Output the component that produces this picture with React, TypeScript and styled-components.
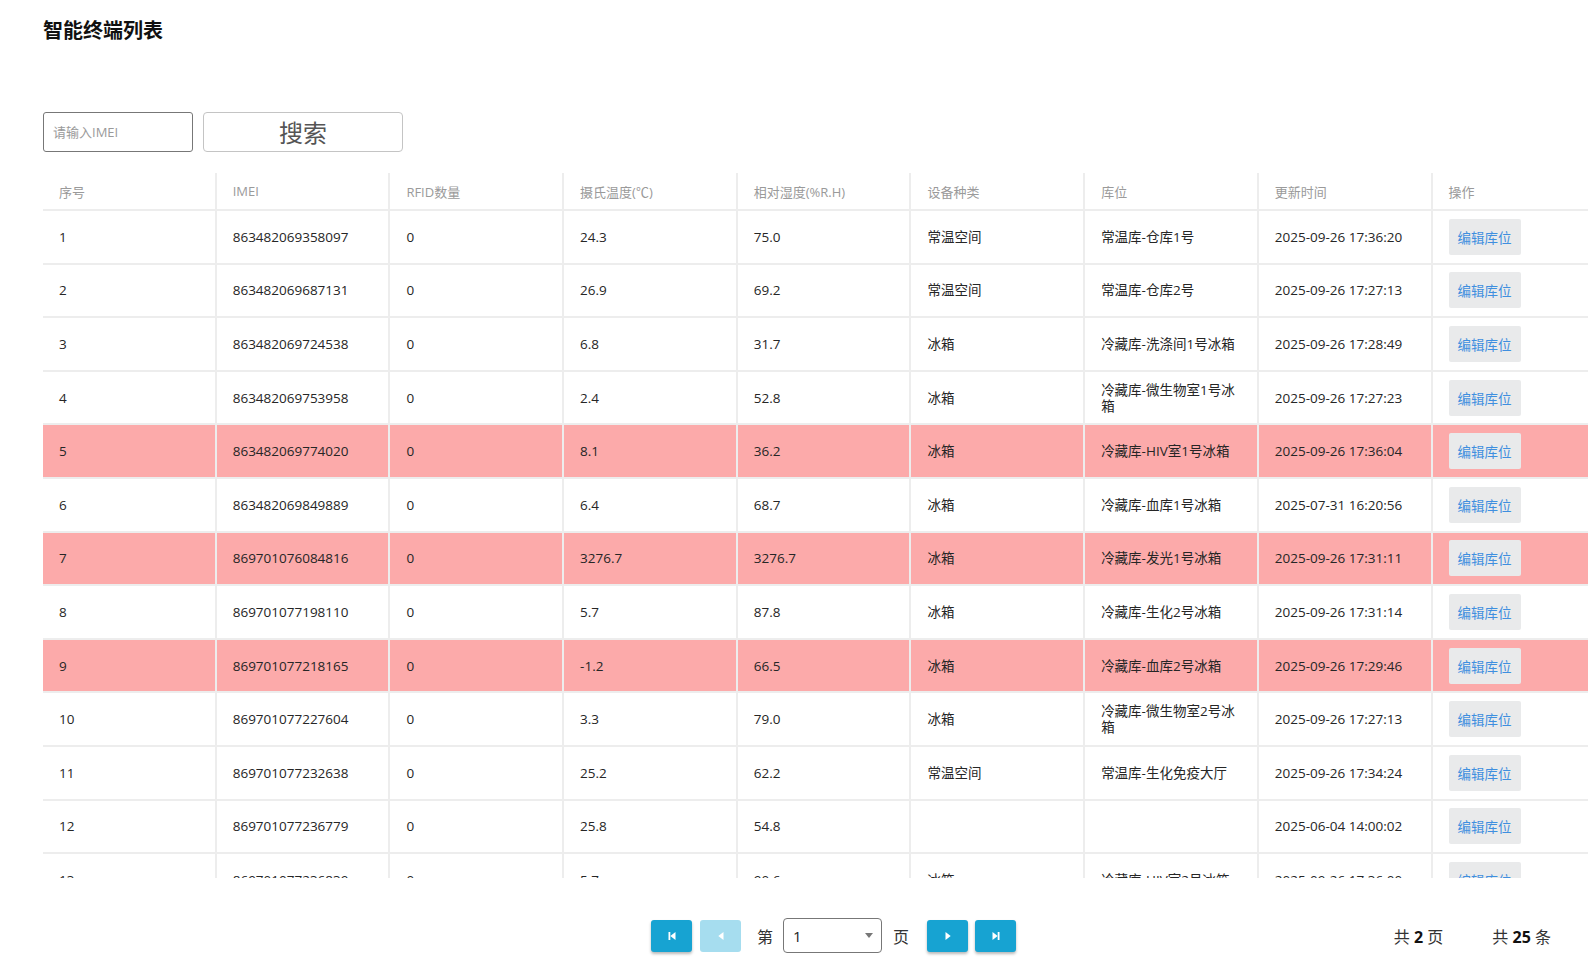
import React from "react";
import styled, { createGlobalStyle } from "styled-components";

const FONT = `"Open Sans", "Noto Sans CJK SC", sans-serif`;

const Global = createGlobalStyle`
  html, body { margin: 0; padding: 0; background: #fff; }
  body {
    font-family: ${FONT};
    color: #333;
    overflow: hidden;
  }
  * { box-sizing: border-box; }
`;

const Page = styled.div`
  width: 1588px;
  height: 966px;
  padding: 16px 0 0 43px;
  overflow: hidden;
`;

const Title = styled.h1`
  margin: 0;
  font-size: 20px;
  line-height: 28px;
  font-weight: 700;
  color: #111;
  font-family: "Noto Sans CJK SC", sans-serif;
`;

const Toolbar = styled.div`
  display: flex;
  gap: 10px;
  margin-top: 68px;
  height: 40px;
`;

const SearchInput = styled.input`
  width: 150px;
  height: 40px;
  border: 1px solid #777;
  border-radius: 3px;
  padding: 0 9px;
  font-size: 13px;
  font-family: ${FONT};
  color: #333;
  outline: none;
  &::placeholder { color: #9a9a9a; font-family: ${FONT}; }
`;

const SearchButton = styled.button`
  width: 200px;
  height: 40px;
  border: 1px solid #c4c4c4;
  border-radius: 4px;
  background: #fff;
  color: #555;
  font-size: 24px;
  font-family: "Noto Sans CJK SC", sans-serif;
  line-height: 1;
  padding: 0;
`;

const TableFrame = styled.div`
  margin-top: 21px;
  height: 705px;
  overflow: hidden;
`;

const COLS = "repeat(9, 173.7px)";

const HeadRow = styled.div`
  display: grid;
  grid-template-columns: ${COLS};
  height: 38px;
  border-bottom: 2px solid #ededed;
`;

const HeadCell = styled.div`
  display: flex;
  align-items: center;
  padding: 0 16px;
  font-size: 13px;
  font-family: ${FONT};
  color: #9a9a9a;
  border-right: 2px solid #ededed;
`;

const Row = styled.div<{ $alert?: boolean }>`
  display: grid;
  grid-template-columns: ${COLS};
  height: 53.6px;
  border-bottom: 2px solid #ededed;
  background: ${(p) => (p.$alert ? "#fcaaaa" : "#fff")};
`;

const Cell = styled.div`
  display: flex;
  align-items: center;
  padding: 0 16px;
  font-size: 13.5px;
  font-family: ${FONT};
  line-height: 16px;
  color: #262626;
  border-right: 2px solid #ededed;
  overflow: hidden;
`;

const EditButton = styled.button`
  width: 72px;
  height: 36px;
  border: none;
  border-radius: 2px;
  background: #e9eaeb;
  color: #3f8fdf;
  font-size: 13.5px;
  font-family: "Noto Sans CJK SC", sans-serif;
  padding: 0;
`;

const Pager = styled.div`
  display: flex;
  align-items: center;
  justify-content: space-between;
  margin-top: 40px;
  height: 35px;
  padding: 0 37px 0 608px;
`;

const PagerGroup = styled.div`
  display: flex;
  align-items: center;
`;

const PageBtn = styled.button<{ $disabled?: boolean; $gap?: number }>`
  width: 41px;
  height: 32px;
  border: none;
  border-radius: 3px;
  padding: 0;
  margin-left: ${(p) => p.$gap ?? 0}px;
  display: flex;
  align-items: center;
  justify-content: center;
  background: ${(p) => (p.$disabled ? "#a6ddef" : "#17a3d2")};
  box-shadow: ${(p) => (p.$disabled ? "none" : "0 2px 3px rgba(0,0,0,0.28)")};
`;

const PagerLabel = styled.span<{ $gap: number }>`
  margin-left: ${(p) => p.$gap}px;
  font-size: 16px;
  color: #333;
  font-family: "Noto Sans CJK SC", sans-serif;
`;

const SelectWrap = styled.div`
  position: relative;
  margin-left: 10px;
  width: 99px;
  height: 35px;
`;

const PageSelect = styled.select`
  appearance: none;
  width: 100%;
  height: 100%;
  border: 1px solid #777;
  border-radius: 4px;
  background: #fff;
  padding: 0 0 0 9px;
  font-size: 15px;
  font-family: ${FONT};
  color: #222;
  outline: none;
`;

const Caret = styled.span`
  position: absolute;
  right: 9px;
  top: 15px;
  width: 0;
  height: 0;
  border-left: 4px solid transparent;
  border-right: 4px solid transparent;
  border-top: 5px solid #777;
  pointer-events: none;
`;

const Summary = styled.div`
  display: flex;
  gap: 49px;
  font-size: 16px;
  color: #333;
  font-family: ${FONT};
`;

const Strong = styled.b`
  font-weight: 700;
  color: #111;
`;

type Rec = {
  imei: string;
  rfid: string;
  temp: string;
  hum: string;
  kind: string;
  loc: string;
  time: string;
  alert?: boolean;
};

const rows: Rec[] = [
  { imei: "863482069358097", rfid: "0", temp: "24.3", hum: "75.0", kind: "常温空间", loc: "常温库-仓库1号", time: "2025-09-26 17:36:20" },
  { imei: "863482069687131", rfid: "0", temp: "26.9", hum: "69.2", kind: "常温空间", loc: "常温库-仓库2号", time: "2025-09-26 17:27:13" },
  { imei: "863482069724538", rfid: "0", temp: "6.8", hum: "31.7", kind: "冰箱", loc: "冷藏库-洗涤间1号冰箱", time: "2025-09-26 17:28:49" },
  { imei: "863482069753958", rfid: "0", temp: "2.4", hum: "52.8", kind: "冰箱", loc: "冷藏库-微生物室1号冰箱", time: "2025-09-26 17:27:23" },
  { imei: "863482069774020", rfid: "0", temp: "8.1", hum: "36.2", kind: "冰箱", loc: "冷藏库-HIV室1号冰箱", time: "2025-09-26 17:36:04", alert: true },
  { imei: "863482069849889", rfid: "0", temp: "6.4", hum: "68.7", kind: "冰箱", loc: "冷藏库-血库1号冰箱", time: "2025-07-31 16:20:56" },
  { imei: "869701076084816", rfid: "0", temp: "3276.7", hum: "3276.7", kind: "冰箱", loc: "冷藏库-发光1号冰箱", time: "2025-09-26 17:31:11", alert: true },
  { imei: "869701077198110", rfid: "0", temp: "5.7", hum: "87.8", kind: "冰箱", loc: "冷藏库-生化2号冰箱", time: "2025-09-26 17:31:14" },
  { imei: "869701077218165", rfid: "0", temp: "-1.2", hum: "66.5", kind: "冰箱", loc: "冷藏库-血库2号冰箱", time: "2025-09-26 17:29:46", alert: true },
  { imei: "869701077227604", rfid: "0", temp: "3.3", hum: "79.0", kind: "冰箱", loc: "冷藏库-微生物室2号冰箱", time: "2025-09-26 17:27:13" },
  { imei: "869701077232638", rfid: "0", temp: "25.2", hum: "62.2", kind: "常温空间", loc: "常温库-生化免疫大厅", time: "2025-09-26 17:34:24" },
  { imei: "869701077236779", rfid: "0", temp: "25.8", hum: "54.8", kind: "", loc: "", time: "2025-06-04 14:00:02" },
  { imei: "869701077236839", rfid: "0", temp: "5.7", hum: "90.6", kind: "冰箱", loc: "冷藏库-HIV室2号冰箱", time: "2025-09-26 17:36:00" },
];

const headers = ["序号", "IMEI", "RFID数量", "摄氏温度(℃)", "相对湿度(%R.H)", "设备种类", "库位", "更新时间", "操作"];

const FirstIcon = () => (
  <svg width="12" height="12" viewBox="0 0 12 12">
    <rect x="2.5" y="2" width="1.8" height="8" fill="#fff" />
    <polygon points="9.5,2 9.5,10 4.3,6" fill="#fff" />
  </svg>
);
const PrevIcon = () => (
  <svg width="12" height="12" viewBox="0 0 12 12">
    <polygon points="8.5,2 8.5,10 3.3,6" fill="#fff" />
  </svg>
);
const NextIcon = () => (
  <svg width="12" height="12" viewBox="0 0 12 12">
    <polygon points="3.5,2 3.5,10 8.7,6" fill="#fff" />
  </svg>
);
const LastIcon = () => (
  <svg width="12" height="12" viewBox="0 0 12 12">
    <polygon points="2.5,2 2.5,10 7.7,6" fill="#fff" />
    <rect x="7.7" y="2" width="1.8" height="8" fill="#fff" />
  </svg>
);

export default function App() {
  return (
    <>
      <Global />
      <Page>
        <Title>智能终端列表</Title>
        <Toolbar>
          <SearchInput placeholder="请输入IMEI" />
          <SearchButton>搜索</SearchButton>
        </Toolbar>
        <TableFrame>
          <HeadRow>
            {headers.map((h) => (
              <HeadCell key={h}>{h}</HeadCell>
            ))}
          </HeadRow>
          {rows.map((r, i) => (
            <Row key={r.imei} $alert={r.alert}>
              <Cell>{i + 1}</Cell>
              <Cell>{r.imei}</Cell>
              <Cell>{r.rfid}</Cell>
              <Cell>{r.temp}</Cell>
              <Cell>{r.hum}</Cell>
              <Cell>{r.kind}</Cell>
              <Cell>{r.loc}</Cell>
              <Cell>{r.time}</Cell>
              <Cell>
                <EditButton>编辑库位</EditButton>
              </Cell>
            </Row>
          ))}
        </TableFrame>
        <Pager>
          <PagerGroup>
            <PageBtn>
              <FirstIcon />
            </PageBtn>
            <PageBtn $disabled $gap={8}>
              <PrevIcon />
            </PageBtn>
            <PagerLabel $gap={16}>第</PagerLabel>
            <SelectWrap>
              <PageSelect defaultValue="1">
                <option value="1">1</option>
                <option value="2">2</option>
              </PageSelect>
              <Caret />
            </SelectWrap>
            <PagerLabel $gap={11}>页</PagerLabel>
            <PageBtn $gap={18}>
              <NextIcon />
            </PageBtn>
            <PageBtn $gap={7}>
              <LastIcon />
            </PageBtn>
          </PagerGroup>
          <Summary>
            <span>
              共 <Strong>2</Strong> 页
            </span>
            <span>
              共 <Strong>25</Strong> 条
            </span>
          </Summary>
        </Pager>
      </Page>
    </>
  );
}
